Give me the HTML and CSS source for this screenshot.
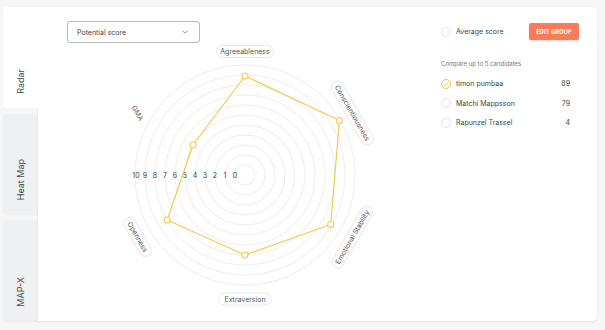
FILE: index.html
```html
<!DOCTYPE html>
<html lang="en">
<head>
<meta charset="utf-8">
<title>Radar</title>
<link rel="stylesheet" href="styles.css">
</head>
<body>
<div class="app">
  <nav class="tabs">
    <div class="tab active"><span>Radar</span></div>
    <div class="tab"><span>Heat Map</span></div>
    <div class="tab"><span>MAP-X</span></div>
  </nav>
  <main class="panel">
    <section class="chart-area">
      <div class="select">
        <span>Potential score</span>
        <svg class="chev" width="6" height="4" viewBox="0 0 6 4"><path d="M0.5 0.8 L3 3.2 L5.5 0.8" fill="none" stroke="#888" stroke-width="0.9"/></svg>
      </div>
      <svg class="radar" width="403" height="278" viewBox="38 43 403 278">
        <g class="rings">
          <circle cx="245" cy="175" r="10"/><circle cx="245" cy="175" r="20"/><circle cx="245" cy="175" r="30"/>
          <circle cx="245" cy="175" r="40"/><circle cx="245" cy="175" r="50"/><circle cx="245" cy="175" r="60"/>
          <circle cx="245" cy="175" r="70"/><circle cx="245" cy="175" r="80"/><circle cx="245" cy="175" r="90"/>
          <circle cx="245" cy="175" r="100"/><circle cx="245" cy="175" r="110"/>
        </g>
        <g class="scale">
          <text x="136" y="177.5">10</text><text x="145" y="177.5">9</text><text x="155" y="177.5">8</text>
          <text x="165" y="177.5">7</text><text x="175" y="177.5">6</text><text x="185" y="177.5">5</text>
          <text x="195" y="177.5">4</text><text x="205" y="177.5">3</text><text x="215" y="177.5">2</text>
          <text x="225" y="177.5">1</text><text x="235" y="177.5">0</text>
        </g>
        <polygon class="area" points="245,76 339.4,120.5 330.7,224.5 245,255 167.1,220 193,145"/>
        <g class="dots">
          <circle cx="245" cy="76" r="3"/><circle cx="339.4" cy="120.5" r="3"/><circle cx="330.7" cy="224.5" r="3"/>
          <circle cx="245" cy="255" r="3"/><circle cx="167.1" cy="220" r="3"/><circle cx="193" cy="145" r="3"/>
        </g>
        <g class="pill" transform="translate(245 51.5)"><rect x="-28.5" y="-6" width="57" height="12" rx="6"/><text>Agreeableness</text></g>
        <g class="pill" transform="translate(352.4 113) rotate(60)"><rect x="-36" y="-6" width="72" height="12" rx="6"/><text>Conscientiousness</text></g>
        <g class="pill" transform="translate(352.4 237) rotate(-60)"><rect x="-35" y="-6" width="70" height="12" rx="6"/><text>Emotional Stability</text></g>
        <g class="pill" transform="translate(245 299)"><rect x="-26" y="-6" width="52" height="12" rx="6"/><text>Extraversion</text></g>
        <g class="pill" transform="translate(137.6 237) rotate(60)"><rect x="-21.5" y="-6" width="43" height="12" rx="6"/><text>Openness</text></g>
        <g class="pill bare" transform="translate(137.6 113) rotate(60)"><text>GMA</text></g>
      </svg>
    </section>
    <aside class="side">
      <div class="side-top">
        <label class="avg"><span class="radio"></span>Average score</label>
        <button class="edit">EDIT GROUP</button>
      </div>
      <p class="hint">Compare up to 5 candidates</p>
      <ul class="cands">
        <li><span class="radio checked"><svg width="8" height="8" viewBox="0 0 8 8"><path d="M1.8 4.1 L3.4 5.7 L6.3 2.4" fill="none" stroke="#f4c34a" stroke-width="0.9"/></svg></span><span class="name">timon pumbaa</span><span class="score">89</span></li>
        <li><span class="radio"></span><span class="name">Matchi Mappsson</span><span class="score">79</span></li>
        <li><span class="radio"></span><span class="name">Rapunzel Trassel</span><span class="score">4</span></li>
      </ul>
    </aside>
  </main>
</div>
</body>
</html>
```

FILE: styles.css
```css
html, body {
  margin: 0;
  padding: 0;
}
body {
  background: #f6f6f6;
  font-family: Inter, "Noto Sans", "Liberation Sans", sans-serif;
  color: #444;
  width: 605px;
  height: 330px;
  overflow: hidden;
}
.app {
  display: flex;
  margin: 7px 0 0 3px;
  width: 594px;
  height: 314px;
}
.tabs {
  width: 35px;
  display: flex;
  flex-direction: column;
  gap: 6px;
  flex-shrink: 0;
}
.tab {
  flex: 1;
  background: #eff0f2;
  border-radius: 4px 0 0 4px;
  display: flex;
  align-items: flex-end;
  justify-content: center;
  padding-bottom: 14px;
  box-sizing: border-box;
  box-shadow: 0 1px 2px rgba(0, 0, 0, 0.04);
}
.tab span {
  writing-mode: vertical-rl;
  transform: rotate(180deg);
  font-size: 9px;
  color: #444;
}
.tab.active {
  background: #fff;
  position: relative;
  z-index: 1;
  box-shadow: none;
}
.panel {
  flex: 1;
  display: flex;
  background: #fff;
  border-radius: 0 5px 5px 0;
  box-shadow: 0 1px 3px rgba(0, 0, 0, 0.07);
}
.chart-area {
  width: 403px;
  flex-shrink: 0;
}
.select {
  margin: 14px 0 0 29px;
  width: 133px;
  height: 22px;
  box-sizing: border-box;
  border: 1px solid #b9b9b9;
  border-radius: 3px;
  display: flex;
  align-items: center;
  justify-content: space-between;
  padding: 0 11px 0 9px;
  font-size: 7px;
  color: #444;
}
.chev {
  display: block;
}
.radar {
  display: block;
  font-family: Inter, "Noto Sans", "Liberation Sans", sans-serif;
}
.rings circle {
  fill: none;
  stroke: #ededed;
  stroke-width: 1;
}
.scale text {
  font-size: 7px;
  fill: #444;
  text-anchor: middle;
}
.area {
  fill: none;
  stroke: #f6c94f;
  stroke-width: 1.2;
  stroke-linejoin: round;
}
.dots circle {
  fill: #fff;
  stroke: #f6c94f;
  stroke-width: 1.1;
}
.pill rect {
  fill: #fff;
  stroke: #e8e8e8;
  stroke-width: 1;
}
.pill text {
  font-size: 7px;
  fill: #555;
  text-anchor: middle;
  dominant-baseline: central;
}
.side {
  flex: 1;
  padding: 16px 18px 0 0;
}
.side-top {
  display: flex;
  align-items: center;
  justify-content: space-between;
  height: 17px;
}
.avg {
  display: flex;
  align-items: center;
  gap: 5px;
  font-size: 7px;
  color: #444;
}
.radio {
  width: 10px;
  height: 10px;
  border: 1px solid #e3e3e3;
  border-radius: 50%;
  box-sizing: border-box;
  display: flex;
  align-items: center;
  justify-content: center;
  flex-shrink: 0;
}
.radio.checked {
  border-color: #f4c34a;
}
.radio svg {
  display: block;
}
.edit {
  width: 50px;
  height: 17px;
  padding: 0;
  background: #fb7b59;
  color: #fff;
  border: 0;
  border-radius: 2px;
  font-family: Inter, "Noto Sans", "Liberation Sans", sans-serif;
  font-weight: 700;
  font-size: 5.5px;
  letter-spacing: 0.2px;
  box-shadow: 0 1px 2px rgba(251, 123, 89, 0.3);
}
.hint {
  margin: 20px 0 0;
  font-size: 6px;
  line-height: 8px;
  color: #777;
}
.cands {
  list-style: none;
  margin: 6px 0 0;
  padding: 0 9px 0 0;
}
.cands li {
  display: flex;
  align-items: center;
  height: 19.5px;
  font-size: 7px;
  color: #444;
}
.name {
  flex: 1;
  margin-left: 5px;
}
.score {
  text-align: right;
}
```
